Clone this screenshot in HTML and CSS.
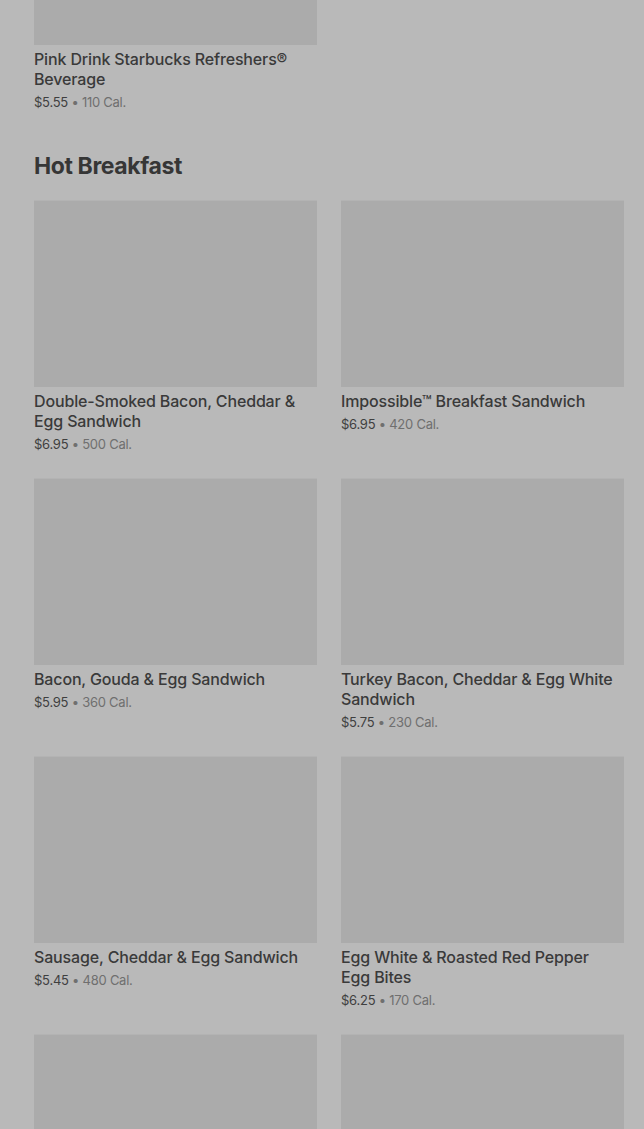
FILE: index.html
```html
<!DOCTYPE html>
<html lang="en">
<head>
    <meta charset="UTF-8">
    <meta name="viewport" content="width=device-width, initial-scale=1.0">
    <title>Menu</title>
    <link rel="stylesheet" href="styles.css">
</head>
<body>
    <main class="menu">
        <section class="category scrolled">
            <div class="grid">
                <div class="item">
                    <div class="thumb"></div>
                    <div class="name">Pink Drink Starbucks Refreshers® Beverage</div>
                    <div class="meta"><span class="price">$5.55</span> • 110 Cal.</div>
                </div>
            </div>
        </section>

        <section class="category">
            <h2>Hot Breakfast</h2>
            <div class="grid">
                <div class="item">
                    <div class="thumb"></div>
                    <div class="name">Double-Smoked Bacon, Cheddar &amp; Egg Sandwich</div>
                    <div class="meta"><span class="price">$6.95</span> • 500 Cal.</div>
                </div>
                <div class="item">
                    <div class="thumb"></div>
                    <div class="name">Impossible™ Breakfast Sandwich</div>
                    <div class="meta"><span class="price">$6.95</span> • 420 Cal.</div>
                </div>
                <div class="item">
                    <div class="thumb"></div>
                    <div class="name">Bacon, Gouda &amp; Egg Sandwich</div>
                    <div class="meta"><span class="price">$5.95</span> • 360 Cal.</div>
                </div>
                <div class="item">
                    <div class="thumb"></div>
                    <div class="name">Turkey Bacon, Cheddar &amp; Egg White Sandwich</div>
                    <div class="meta"><span class="price">$5.75</span> • 230 Cal.</div>
                </div>
                <div class="item">
                    <div class="thumb"></div>
                    <div class="name">Sausage, Cheddar &amp; Egg Sandwich</div>
                    <div class="meta"><span class="price">$5.45</span> • 480 Cal.</div>
                </div>
                <div class="item">
                    <div class="thumb"></div>
                    <div class="name">Egg White &amp; Roasted Red Pepper Egg Bites</div>
                    <div class="meta"><span class="price">$6.25</span> • 170 Cal.</div>
                </div>
                <div class="item">
                    <div class="thumb"></div>
                </div>
                <div class="item">
                    <div class="thumb"></div>
                </div>
            </div>
        </section>
    </main>
</body>
</html>
```
FILE: styles.css
```css
html, body {
    margin: 0;
    height: 100%;
    overflow: hidden;
    background-color: #b9b9b9;
}

body {
    font-family: Inter, "Noto Sans", sans-serif;
    color: #3b3b3b;
}

.menu {
    padding: 0 20px 0 34px;
}

/* page is scrolled, top card image is cut off */
.scrolled {
    margin-top: -142px;
}

.category h2 {
    margin: 38px 0 18px;
    font-size: 23px;
    line-height: 32px;
    font-weight: 700;
    letter-spacing: -0.4px;
    color: #363636;
}

.grid {
    display: grid;
    grid-template-columns: 1fr 1fr;
    column-gap: 24px;
    row-gap: 24px;
}

.item {
    min-height: 254px;
}

.thumb {
    height: 187px;
    background-color: #ababab;
    border-top: 1px solid #b3b3b3;
    box-sizing: border-box;
}

.name {
    margin-top: 4px;
    padding-right: 6px;
    font-size: 16px;
    line-height: 20px;
    font-weight: 500;
    letter-spacing: -0.15px;
    color: #3a3a3a;
}

.meta {
    margin-top: 3px;
    font-size: 13px;
    line-height: 20px;
    letter-spacing: -0.25px;
    color: #6f6f6f;
}

.price {
    color: #3f3f3f;
}
```
